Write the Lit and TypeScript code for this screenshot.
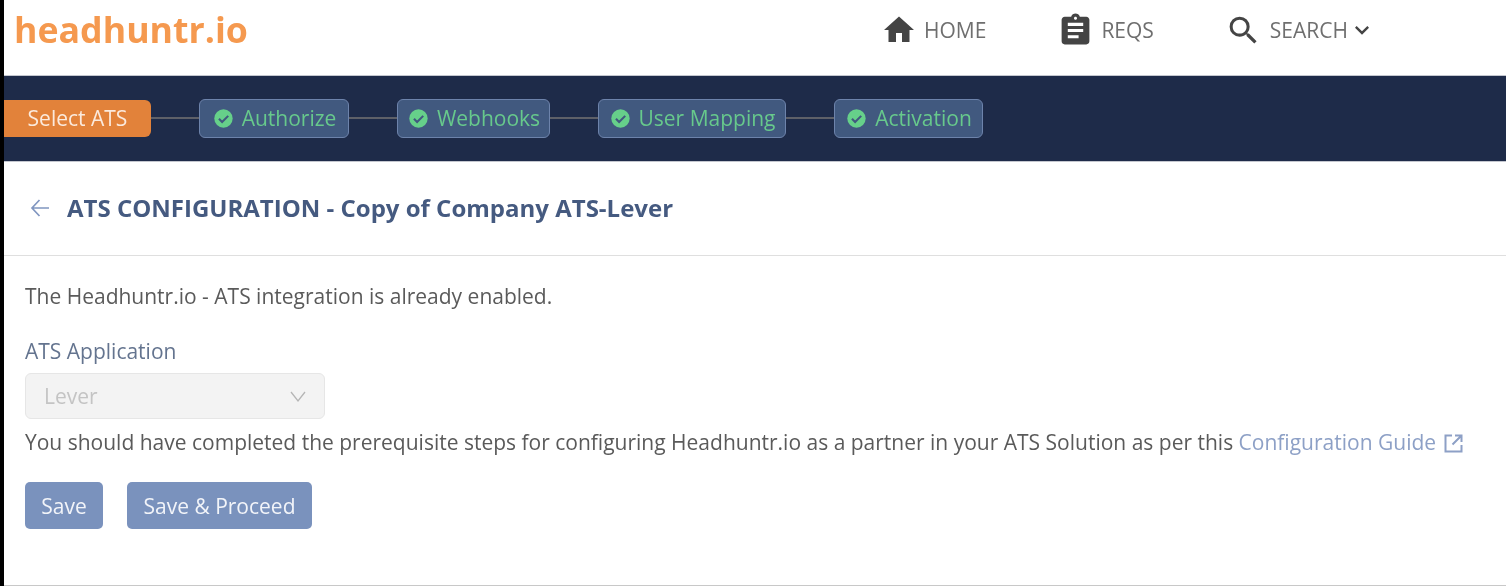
import { LitElement, html, css } from "lit";
import { customElement } from "lit/decorators.js";

const check = html`<svg class="check" viewBox="0 0 24 24"><circle cx="12" cy="12" r="10.5" fill="#66d08a"/><path d="M6.8 12.4l3.6 3.6 7-7" fill="none" stroke="#41597f" stroke-width="2.4"/></svg>`;

@customElement("app-root")
export class AppRoot extends LitElement {
  static styles = css`
    :host { display: block; height: 586px; background: #000; font-family: "Open Sans", "Noto Sans", sans-serif; overflow: hidden; }
    .page { margin-left: 4px; height: 585px; background: #fff; display: flex; flex-direction: column; border-bottom: 1px solid #c8c8c8; filter: blur(0.7px); }
    header { height: 75px; flex: none; display: flex; align-items: center; box-sizing: border-box; padding-bottom: 15px; }
    .logo { margin-left: 10px; font-size: 35.7px; font-weight: 700; color: #f5994f; line-height: 1; }
    nav { margin-left: auto; margin-right: 130px; display: flex; align-items: center; font-size: 21px; color: #6f6f6f; }
    .nav-item { display: flex; align-items: center; }
    .nav-item svg { display: block; fill: #444; flex: none; }
    .home svg { margin-right: 7px; }
    .home { margin-right: 71px; }
    .reqs svg { margin-right: 7px; }
    .reqs { margin-right: 71px; }
    .search svg:first-child { margin-right: 8px; }
    .bar { height: 87px; flex: none; background: #1e2b49; display: flex; align-items: center; padding-bottom: 1px; box-sizing: border-box; border-top: 1px solid #c4c7cf; border-bottom: 1px solid #c4c7cf; }
    .step { height: 39px; box-sizing: border-box; border-radius: 6px; display: flex; align-items: center; font-size: 21px; white-space: nowrap; }
    .active { background: #e2823a; color: #fbeadd; width: 147px; justify-content: center; height: 37px; border-radius: 0 6px 6px 0; }
    .done { background: #41597f; border: 1.5px solid #6d83ab; color: #67c98c; gap: 8px; justify-content: center; padding-left: 1px; }
    .check { width: 21px; height: 21px; flex: none; }
    .line { height: 1.5px; background: #5e6068; flex: none; width: 48px; }
    .title-row { height: 94px; flex: none; display: flex; align-items: center; border-bottom: 1px solid #dfdfdf; box-sizing: border-box; padding: 0 0 2px 25px; gap: 16px; }
    .title-row svg { display: block; }
    h1 { margin: 0; font-size: 24px; font-weight: 700; color: #455a80; line-height: 1; }
    main { padding: 27px 21px 0; color: #5a5a5a; font-size: 21px; line-height: 27px; }
    p { margin: 0; white-space: nowrap; }
    .label { margin-top: 28px; color: #64748f; }
    .select { margin-top: 8px; width: 300px; height: 46px; box-sizing: border-box; background: #f3f3f3; border: 1px solid #e6e6e6; border-radius: 6px; display: flex; align-items: center; justify-content: space-between; padding: 0 18px; color: #c4c4c4; }
    .prereq { margin-top: 10px; }
    a { color: #8da0c6; text-decoration: none; }
    a svg { vertical-align: -4px; margin-left: 1px; }
    .buttons { margin-top: 26px; display: flex; gap: 24px; }
    .btn { height: 47px; box-sizing: border-box; padding-top: 1px; background: #7a92bd; color: #f2f4f9; border-radius: 5px; display: flex; align-items: center; justify-content: center; font-size: 21px; }
    .save { width: 78px; }
    .proceed { width: 185px; }
  `;

  render() {
    const steps: [string, number][] = [["Authorize", 150], ["Webhooks", 153], ["User Mapping", 188], ["Activation", 149]];
    return html`<div class="page">
      <header>
        <div class="logo">headhuntr.io</div>
        <nav>
          <div class="nav-item home"><svg width="36" height="36" viewBox="0 0 24 24"><path d="M10 20v-6h4v6h5v-8h3L12 3 2 12h3v8z"/></svg>HOME</div>
          <div class="nav-item reqs"><svg width="37" height="37" viewBox="0 0 24 24"><path d="M19 3h-4.18C14.4 1.84 13.3 1 12 1s-2.4.84-2.82 2H5c-1.1 0-2 .9-2 2v14c0 1.1.9 2 2 2h14c1.1 0 2-.9 2-2V5c0-1.1-.9-2-2-2zm-7 0c.55 0 1 .45 1 1s-.45 1-1 1-1-.45-1-1 .45-1 1-1zm2 14H7v-2h7v2zm3-4H7v-2h10v2zm0-4H7V7h10v2z"/></svg>REQS</div>
          <div class="nav-item search"><svg width="37" height="37" viewBox="0 0 24 24"><path d="M15.5 14h-.79l-.28-.27A6.47 6.47 0 0 0 16 9.5 6.5 6.5 0 1 0 9.5 16c1.61 0 3.09-.59 4.23-1.57l.27.28v.79l5 4.99L20.49 19l-4.99-5zm-6 0C7.01 14 5 11.99 5 9.5S7.01 5 9.5 5 14 7.01 14 9.5 11.99 14 9.5 14z"/></svg>SEARCH<svg width="28" height="28" viewBox="0 0 24 24"><path d="M7.41 8.59 12 13.17l4.59-4.58L18 10l-6 6-6-6z"/></svg></div>
        </nav>
      </header>
      <div class="bar">
        <div class="step active">Select ATS</div>
        <div class="line"></div>
        ${steps.map(([t, w], i) => html`<div class="step done" style="width:${w}px">${check}${t}</div>${i < steps.length - 1 ? html`<div class="line"></div>` : ""}`)}
      </div>
      <div class="title-row">
        <svg width="22" height="22" viewBox="0 0 22 22"><path d="M20 11H3M10.5 3 3 11l7.5 8" fill="none" stroke="#8096c0" stroke-width="1.7"/></svg>
        <h1>ATS CONFIGURATION - Copy of Company ATS-Lever</h1>
      </div>
      <main>
        <p>The Headhuntr.io - ATS integration is already enabled.</p>
        <p class="label">ATS Application</p>
        <div class="select"><span>Lever</span><svg width="16" height="16" viewBox="0 0 16 16"><path d="M1 4l7 9 7-9" fill="none" stroke="#b5b5b5" stroke-width="1.3"/></svg></div>
        <p class="prereq">You should have completed the prerequisite steps for configuring Headhuntr.io as a partner in your ATS Solution as per this <a href="#">Configuration Guide <svg width="21" height="21" viewBox="0 0 21 21"><path d="M9 2.5H2.5v16h16V12M12 2.5h6.5V9M18 3l-8.5 8.5" fill="none" stroke="#8da0c6" stroke-width="2"/></svg></a></p>
        <div class="buttons"><div class="btn save">Save</div><div class="btn proceed">Save &amp; Proceed</div></div>
      </main>
    </div>`;
  }
}
